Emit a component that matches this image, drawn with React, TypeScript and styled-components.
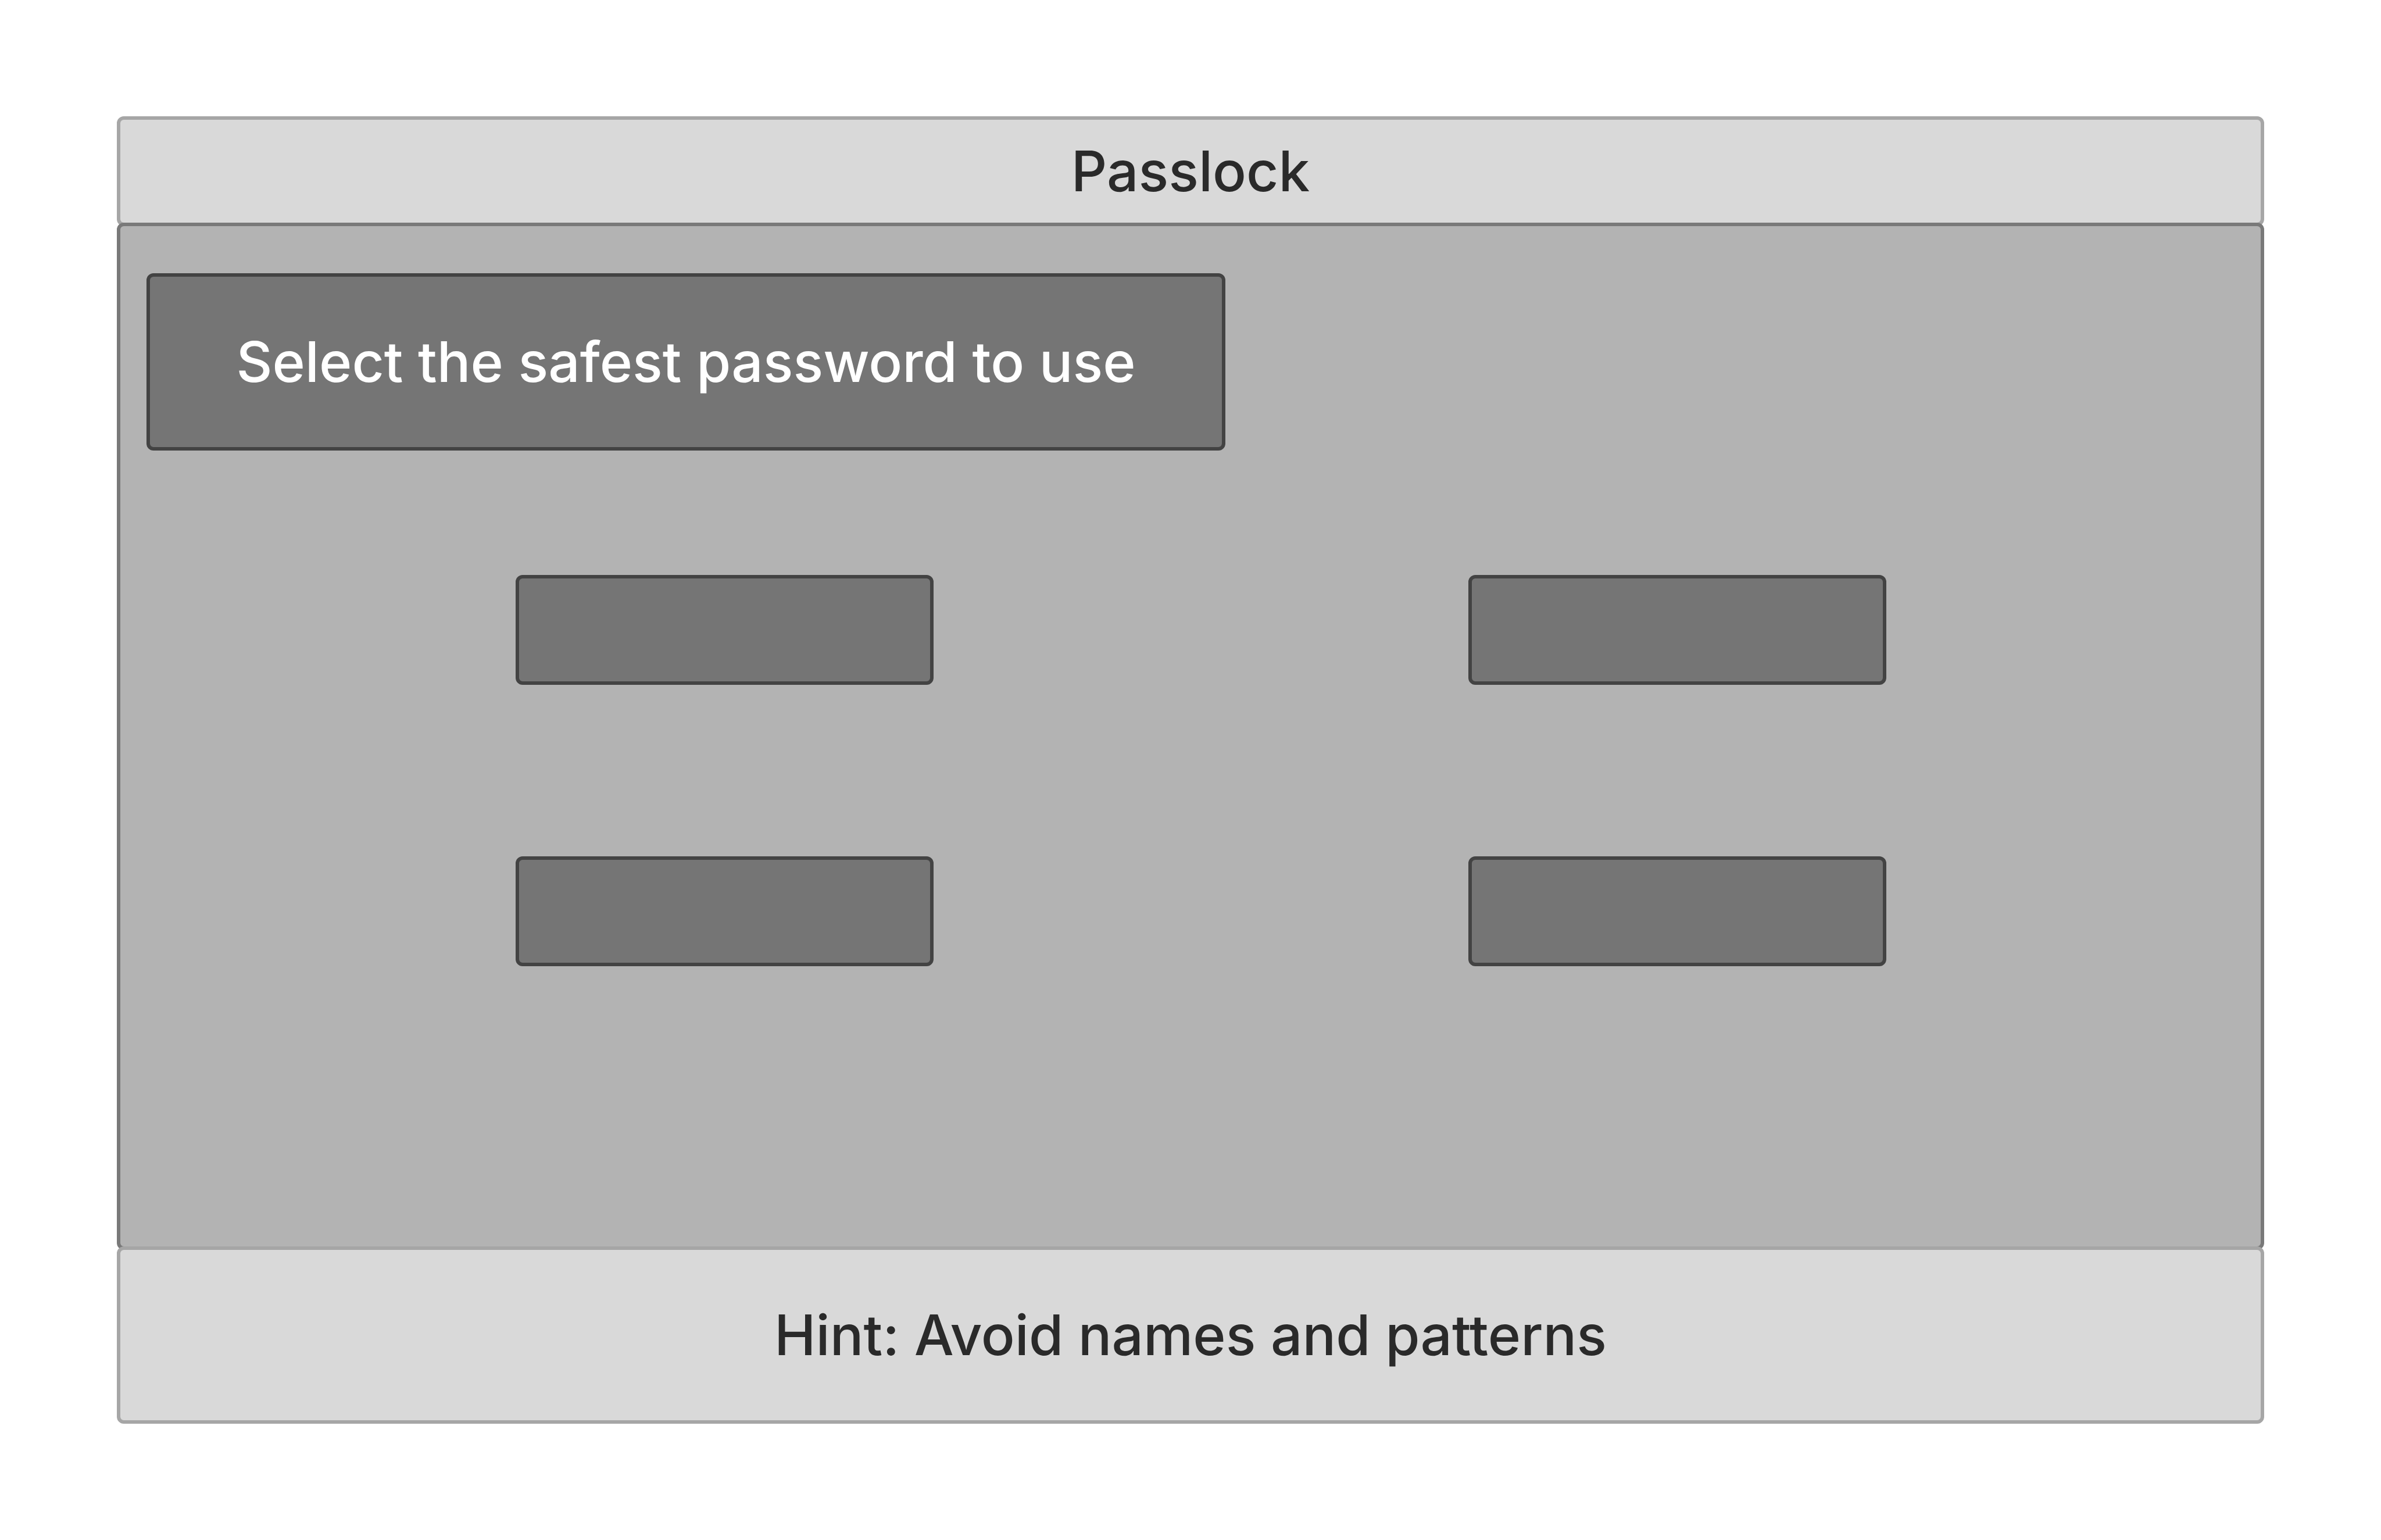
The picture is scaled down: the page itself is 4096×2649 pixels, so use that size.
import React from "react";
import styled, { createGlobalStyle, css } from "styled-components";

const GlobalStyle = createGlobalStyle`
  *,
  *::before,
  *::after {
    box-sizing: border-box;
  }

  body {
    margin: 0;
    background: #ffffff;
    font-family: Inter, "Liberation Sans", sans-serif;
    font-variant-ligatures: none;
  }
`;

const frame = css`
  border-style: solid;
  border-width: 6px;
  border-radius: 12px;
`;

const label = css`
  margin: 0;
  font-size: 96px;
  line-height: 121px;
  font-weight: 500;
  text-align: center;
`;

const Page = styled.div`
  display: flex;
  flex-direction: column;
  min-height: 100vh;
  padding: 200px 201px;
`;

const TitleBar = styled.header`
  ${frame}
  padding: 28px;
  border-color: #a6a6a6;
  background: #d9d9d9;
  color: #2a2a2a;
`;

const HintBar = styled.footer`
  ${frame}
  z-index: 1;
  margin-top: -6px;
  padding: 86px;
  border-color: #a6a6a6;
  background: #d9d9d9;
  color: #2a2a2a;
`;

const Board = styled.main`
  ${frame}
  display: flex;
  flex: 1;
  flex-direction: column;
  gap: 214px;
  margin-top: -6px;
  padding: 81px 45px;
  border-color: #797979;
  background: #b3b3b3;
`;

const Title = styled.h1`
  ${label}
`;

const Hint = styled.p`
  ${label}
`;

const Prompt = styled.h2`
  ${label}
  ${frame}
  width: 1856px;
  max-width: 100%;
  padding: 86px;
  border-color: #434343;
  background: #757575;
  color: #ffffff;
`;

const Options = styled.div`
  display: grid;
  grid-template-columns: repeat(2, minmax(0, 719px));
  justify-content: space-between;
  row-gap: 295px;
  padding: 0 599px 0 635px;
`;

const Option = styled.button`
  ${frame}
  height: 189px;
  padding: 0;
  border-color: #434343;
  background: #757575;
  cursor: pointer;
`;

const choices = [1, 2, 3, 4];

export default function App() {
  return (
    <>
      <GlobalStyle />
      <Page>
        <TitleBar>
          <Title>Passlock</Title>
        </TitleBar>
        <Board>
          <Prompt id="prompt">Select the safest password to use</Prompt>
          <Options role="group" aria-labelledby="prompt">
            {choices.map((choice) => (
              <Option key={choice} type="button" aria-label={`Password ${choice}`} />
            ))}
          </Options>
        </Board>
        <HintBar>
          <Hint>Hint: Avoid names and patterns</Hint>
        </HintBar>
      </Page>
    </>
  );
}
